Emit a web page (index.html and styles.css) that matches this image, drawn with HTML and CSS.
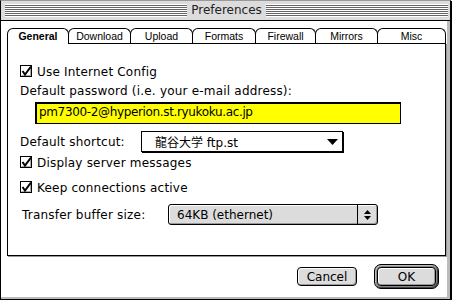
FILE: index.html
```html
<!DOCTYPE html>
<html lang="en">

<head>
    <meta charset="UTF-8">
    <meta name="viewport" content="width=device-width, initial-scale=1.0">
    <title>Preferences</title>
    <link rel="stylesheet" href="styles.css">
</head>

<body>

    <div class="window">
        <div class="titlebar">
            <div class="stripes"></div>
            <div class="title">Preferences</div>
            <div class="stripes"></div>
        </div>

        <div class="content">
            <div class="tabs">
                <div class="tab selected w-general">General</div>
                <div class="tab w-download">Download</div>
                <div class="tab w-upload">Upload</div>
                <div class="tab w-formats">Formats</div>
                <div class="tab w-firewall">Firewall</div>
                <div class="tab w-mirrors">Mirrors</div>
                <div class="tab w-misc">Misc</div>
            </div>

            <div class="panel">
                <label class="check-row row-1">
                    <svg class="checkbox" width="13" height="13" viewBox="0 0 13 13">
                        <rect x="0.5" y="0.5" width="11" height="11" fill="#fff" stroke="#000"/>
                        <path d="M1.5 10.5V1.5H10.5" fill="none" stroke="#fff"/>
                        <path d="M10.5 1.5V10.5H1.5" fill="none" stroke="#aaa"/>
                        <path d="M2.5 6L5 9.5L11 1.5" fill="none" stroke="#000" stroke-width="2"/>
                    </svg>
                    Use Internet Config
                </label>

                <div class="label-row">Default password (i.e. your e-mail address):</div>

                <div class="field">pm7300-2@hyperion.st.ryukoku.ac.jp</div>

                <div class="popup-row">
                    <span class="popup-label">Default shortcut:</span>
                    <div class="popup">
                        <span>龍谷大学 ftp.st</span>
                        <svg width="11" height="6" viewBox="0 0 11 6"><path d="M0 0H11L5.5 6Z" fill="#000"/></svg>
                    </div>
                </div>

                <label class="check-row row-2">
                    <svg class="checkbox" width="13" height="13" viewBox="0 0 13 13">
                        <rect x="0.5" y="0.5" width="11" height="11" fill="#fff" stroke="#000"/>
                        <path d="M1.5 10.5V1.5H10.5" fill="none" stroke="#fff"/>
                        <path d="M10.5 1.5V10.5H1.5" fill="none" stroke="#aaa"/>
                        <path d="M2.5 6L5 9.5L11 1.5" fill="none" stroke="#000" stroke-width="2"/>
                    </svg>
                    Display server messages
                </label>

                <label class="check-row row-3">
                    <svg class="checkbox" width="13" height="13" viewBox="0 0 13 13">
                        <rect x="0.5" y="0.5" width="11" height="11" fill="#fff" stroke="#000"/>
                        <path d="M1.5 10.5V1.5H10.5" fill="none" stroke="#fff"/>
                        <path d="M10.5 1.5V10.5H1.5" fill="none" stroke="#aaa"/>
                        <path d="M2.5 6L5 9.5L11 1.5" fill="none" stroke="#000" stroke-width="2"/>
                    </svg>
                    Keep connections active
                </label>

                <div class="popup-row buffer-row">
                    <span class="popup-label">Transfer buffer size:</span>
                    <div class="popup platinum">
                        <span>64KB (ethernet)</span>
                        <div class="arrows">
                            <svg width="7" height="10" viewBox="0 0 7 10">
                                <path d="M3.5 0L7 4H0Z" fill="#000"/>
                                <path d="M0 6H7L3.5 10Z" fill="#000"/>
                            </svg>
                        </div>
                    </div>
                </div>
            </div>

            <div class="buttons">
                <button class="btn cancel">Cancel</button>
                <div class="default-ring">
                    <button class="btn ok">OK</button>
                </div>
            </div>
        </div>
    </div>

</body>

</html>
```

FILE: styles.css
```css
html,
body {
    margin: 0;
    padding: 0;
    background: #fff;
}

body {
    font-family: "DejaVu Sans", sans-serif;
    font-size: 12px;
    color: #000;
}

.window {
    box-sizing: border-box;
    width: 451px;
    height: 300px;
    border: 1px solid #000;
    border-top-color: #999;
    box-shadow: 1px 1px 0 #000, inset -3px -2px 0 #bbb;
    display: flex;
    flex-direction: column;
}

.titlebar {
    height: 19px;
    background: #dcdcdc;
    border-bottom: 1px solid #000;
    display: flex;
    align-items: center;
    padding: 0 2px 0 4px;
}
.stripes {
    flex: 1;
    height: 13px;
    background: repeating-linear-gradient(#fff 0 1px, #666 1px 2px);
}
.title {
    padding: 0 4px;
    line-height: 19px;
    color: #222;
}

.content {
    display: flex;
    flex-direction: column;
    padding: 7px 0 0 6px;
}

/* tabs */
.tabs {
    display: flex;
    height: 15px;
    position: relative;
    z-index: 1;
}
.tab {
    box-sizing: border-box;
    height: 16px;
    margin-right: -1px;
    border: 1px solid #000;
    border-bottom: none;
    border-radius: 6px 6px 0 0;
    background: #fff;
    font-family: "Liberation Sans", sans-serif;
    font-size: 10.5px;
    line-height: 14px;
    text-align: center;
}
.tab.selected {
    font-weight: bold;
}
.tab:not(.selected) {
    height: 15px;
}
.w-general { width: 62px; }
.w-download { width: 63px; }
.w-upload { width: 63px; }
.w-formats { width: 64px; }
.w-firewall { width: 61px; }
.w-mirrors { width: 63px; }
.w-misc { width: 69px; }

.panel {
    box-sizing: border-box;
    width: 439px;
    height: 213px;
    border: 1px solid #000;
    box-shadow: 1px 1px 0 #999;
    display: flex;
    flex-direction: column;
    padding: 0 0 0 12px;
    letter-spacing: 0.2px;
}

.check-row {
    display: flex;
    align-items: center;
    height: 13px;
    gap: 4px;
}
.row-1 { margin-top: 21px; }
.row-2 { margin-top: 4px; }
.row-3 { margin-top: 12px; }

.label-row {
    margin-top: 6px;
    height: 14px;
    line-height: 14px;
}

.field {
    box-sizing: border-box;
    margin: 4px 0 0 15px;
    width: 366px;
    height: 22px;
    border: 1px solid #000;
    box-shadow: inset 1px 1px 0 #000;
    background: #ffff00;
    padding-left: 3px;
    line-height: 19px;
    letter-spacing: -0.35px;
}

.popup-row {
    display: flex;
    align-items: center;
    margin-top: 7px;
    height: 21px;
}
.popup-label {
    width: 121px;
}
.popup {
    box-sizing: border-box;
    width: 202px;
    height: 21px;
    border: 1px solid #000;
    box-shadow: 1px 1px 0 #000;
    display: flex;
    align-items: center;
    justify-content: space-between;
    padding: 0 4px 0 13px;
    font-family: "DejaVu Sans", "Noto Sans CJK JP", sans-serif;
    letter-spacing: 0;
}

.buffer-row {
    margin-top: 10px;
}
.buffer-row .popup-label {
    width: 146px;
    padding-left: 2px;
}
.popup.platinum {
    width: 210px;
    border-radius: 3px;
    box-shadow: inset -1px -1px 0 #999, inset 1px 1px 0 #fff;
    background: #dcdcdc;
    padding: 0 0 0 8px;
}
.arrows {
    width: 19px;
    height: 100%;
    border-left: 1px solid #000;
    display: flex;
    align-items: center;
    justify-content: center;
}

/* bottom buttons */
.buttons {
    display: flex;
    justify-content: flex-end;
    align-items: center;
    gap: 17px;
    margin-top: 8px;
    padding-right: 11px;
}
.btn {
    box-sizing: border-box;
    font-family: "DejaVu Sans", sans-serif;
    font-size: 12px;
    color: #000;
    background: #dcdcdc;
    border: 1px solid #000;
    border-radius: 4px;
    box-shadow: inset 1px 1px 0 #fff, inset -1px -1px 0 #999;
    padding: 0;
}
.cancel {
    width: 60px;
    height: 19px;
}
.default-ring {
    box-sizing: border-box;
    width: 65px;
    height: 25px;
    border: 1px solid #000;
    border-radius: 7px;
    background: #888;
    box-shadow: inset 1px 1px 0 #bbb, inset -1px -1px 0 #444;
    padding: 2px;
    display: flex;
}
.ok {
    flex: 1;
}
```
